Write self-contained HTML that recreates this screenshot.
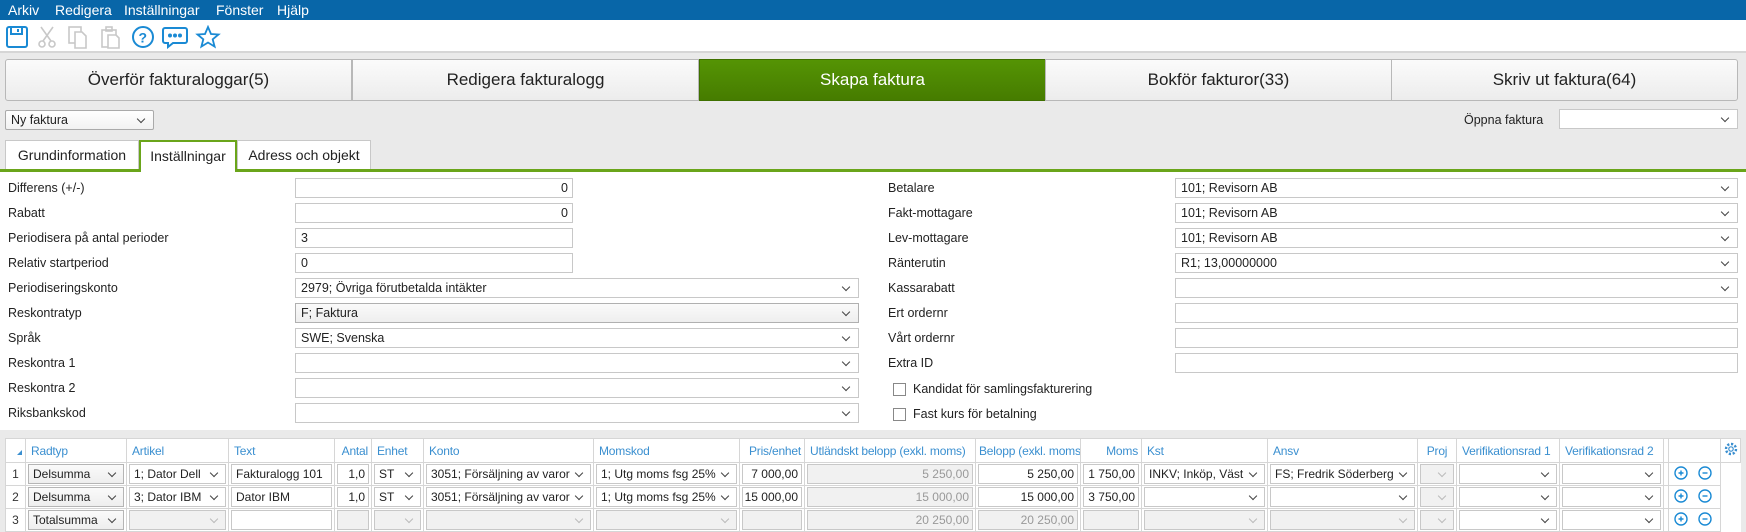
<!DOCTYPE html>
<html><head><meta charset="utf-8"><style>
*{box-sizing:border-box;margin:0;padding:0}
body{width:1746px;height:531px;overflow:hidden;background:#eaeaea;font-family:"Liberation Sans",sans-serif;font-size:13px;color:#222;position:relative}
.a{position:absolute}
#menu{left:0;top:0;width:1746px;height:20px;background:#0866a8;color:#fff;font-size:14px}
#menu span{position:absolute;top:2px}
#tb{left:0;top:20px;width:1746px;height:33px;background:#fff;border-bottom:2px solid #d6d6d6}
.btn{top:59px;height:42px;width:347px;border:1px solid #b8b8b8;background:linear-gradient(#fbfbfb,#ececec);font-size:17px;text-align:center;line-height:40px;color:#222}
.sel,.inp{position:absolute;height:20px;background:#fff;border:1px solid #c8c8c8;font-size:12.5px;line-height:18px;padding-left:5px;white-space:nowrap;overflow:hidden}
.sel::after{content:"";position:absolute;right:9px;top:5px;width:5px;height:5px;border-right:1.3px solid #444;border-bottom:1.3px solid #444;transform:rotate(45deg)}
.inp.r{text-align:right;padding-right:4px}
.tab{top:140px;height:31px;background:#fff;border:1px solid #c8c8c8;border-bottom:none;font-size:14px;text-align:center;line-height:29px}
#form{left:0;top:172px;width:1746px;height:258px;background:#fff}
.lb{position:absolute;font-size:12.5px;color:#222}
table{position:absolute;left:5px;top:438px;width:1735px;border-collapse:collapse;table-layout:fixed;background:#fff}
td{border:1px solid #d6d6d6;height:23px;padding:1px 2px;font-size:12px;overflow:hidden;white-space:nowrap}
th{border:1px solid #d6d6d6;height:22px;font-weight:normal;color:#3a8fd0;text-align:left;padding-left:5px;font-size:12px;letter-spacing:-0.2px;background:#fff;white-space:nowrap;overflow:hidden}
td .c{height:20px;border:1px solid #c8c8c8;background:#fff;line-height:18px;padding-left:4px;padding-right:18px;position:relative;white-space:nowrap;overflow:hidden;font-size:12px}
td .c.s::after{content:"";position:absolute;right:8px;top:5px;width:5px;height:5px;border-right:1.3px solid #444;border-bottom:1.3px solid #444;transform:rotate(45deg)}
td .c.d{background:#f1f1f1;color:#999}
td .c.d.s::after{border-color:#bbb}
td .c.r{text-align:right;padding-right:3px;padding-left:0}
td .c.b{background:linear-gradient(#fafafa,#eee);border-color:#b5b5b5}
td.n{text-align:center;color:#333;padding:0}
.cb{position:absolute;width:13px;height:13px;border:1px solid #888;background:#fff}
</style></head><body>
<div id="menu" class="a"><span style="left:8px">Arkiv</span><span style="left:55px">Redigera</span><span style="left:124px">Inställningar</span><span style="left:216px">Fönster</span><span style="left:277px">Hjälp</span></div>
<div id="tb" class="a">
<svg class="a" style="left:5px;top:5px" width="230" height="24" viewBox="0 0 230 24" fill="none" stroke-width="2">
<g stroke="#1a8ad4"><rect x="2" y="2" width="20" height="20" rx="2"/><rect x="6" y="2" width="11" height="7"/><line x1="13" y1="4" x2="13" y2="7"/></g>
<g stroke="#c8c8c8" stroke-width="1.6"><circle cx="37" cy="19" r="3"/><circle cx="47" cy="19" r="3"/><line x1="38" y1="16" x2="48" y2="2"/><line x1="46" y1="16" x2="36" y2="2"/>
<rect x="64" y="2" width="12" height="16"/><path d="M70 7h7l4 4v12h-11z" fill="#fff"/>
<rect x="97" y="5" width="14" height="17"/><rect x="101" y="2" width="6" height="4"/><path d="M103 10h8l3 3v10h-11z" fill="#fff"/></g>
<g stroke="#1a8ad4"><circle cx="138" cy="12" r="10"/><text x="133.5" y="17.5" font-size="14" fill="#1a8ad4" stroke="none" font-family="Liberation Sans" font-weight="bold">?</text>
<path d="M160 3h20a2 2 0 0 1 2 2v11a2 2 0 0 1-2 2h-12l-5 4v-4h-3a2 2 0 0 1-2-2v-11a2 2 0 0 1 2-2z"/>
<circle cx="165" cy="10.5" r="1" /><circle cx="170" cy="10.5" r="1"/><circle cx="175" cy="10.5" r="1"/>
<path d="M203 2l3 7 7.5.5-5.8 4.8 1.9 7.3-6.6-4.1-6.6 4.1 1.9-7.3-5.8-4.8 7.5-.5z" stroke-width="1.8"/></g>
</svg></div>
<div class="a btn" style="left:5px;border-radius:3px 0 0 3px">Överför fakturaloggar(5)</div>
<div class="a btn" style="left:352px">Redigera fakturalogg</div>
<div class="a btn" style="left:699px;background:linear-gradient(#559404,#467c00);border-color:#3f7000;color:#fff">Skapa faktura</div>
<div class="a btn" style="left:1045px">Bokför fakturor(33)</div>
<div class="a btn" style="left:1391px;width:347px;border-radius:0 3px 3px 0">Skriv ut faktura(64)</div>
<div class="sel" style="left:5px;top:110px;width:149px;background:linear-gradient(#fff,#f2f2f2);border-color:#aaa;border-radius:2px">Ny faktura</div>
<div class="lb" style="left:1464px;top:113px">Öppna faktura</div>
<div class="sel" style="left:1559px;top:109px;width:179px"></div>
<div class="a tab" style="left:5px;width:134px">Grundinformation</div>
<div class="a tab" style="left:139px;width:98px;border:2px solid #6aa51a;border-bottom:none;height:32px">Inställningar</div>
<div class="a tab" style="left:237px;width:134px">Adress och objekt</div>
<div class="a" style="left:0;top:169px;width:1746px;height:3px;background:#6aa51a"></div>
<div class="a" style="left:141px;top:169px;width:94px;height:3px;background:#fff"></div>
<div id="form" class="a"></div>
<div class="lb" style="left:8px;top:181px">Differens (+/-)</div><div class="inp r" style="left:295px;top:178px;width:278px">0</div>
<div class="lb" style="left:8px;top:206px">Rabatt</div><div class="inp r" style="left:295px;top:203px;width:278px">0</div>
<div class="lb" style="left:8px;top:231px">Periodisera på antal perioder</div><div class="inp" style="left:295px;top:228px;width:278px">3</div>
<div class="lb" style="left:8px;top:256px">Relativ startperiod</div><div class="inp" style="left:295px;top:253px;width:278px">0</div>
<div class="lb" style="left:8px;top:281px">Periodiseringskonto</div><div class="sel" style="left:295px;top:278px;width:564px">2979; Övriga förutbetalda intäkter</div>
<div class="lb" style="left:8px;top:306px">Reskontratyp</div><div class="sel" style="left:295px;top:303px;width:564px;background:linear-gradient(#fafafa,#eee);border-color:#b0b0b0">F; Faktura</div>
<div class="lb" style="left:8px;top:331px">Språk</div><div class="sel" style="left:295px;top:328px;width:564px">SWE; Svenska</div>
<div class="lb" style="left:8px;top:356px">Reskontra 1</div><div class="sel" style="left:295px;top:353px;width:564px"></div>
<div class="lb" style="left:8px;top:381px">Reskontra 2</div><div class="sel" style="left:295px;top:378px;width:564px"></div>
<div class="lb" style="left:8px;top:406px">Riksbankskod</div><div class="sel" style="left:295px;top:403px;width:564px"></div>
<div class="lb" style="left:888px;top:181px">Betalare</div><div class="sel" style="left:1175px;top:178px;width:563px">101; Revisorn AB</div>
<div class="lb" style="left:888px;top:206px">Fakt-mottagare</div><div class="sel" style="left:1175px;top:203px;width:563px">101; Revisorn AB</div>
<div class="lb" style="left:888px;top:231px">Lev-mottagare</div><div class="sel" style="left:1175px;top:228px;width:563px">101; Revisorn AB</div>
<div class="lb" style="left:888px;top:256px">Ränterutin</div><div class="sel" style="left:1175px;top:253px;width:563px">R1; 13,00000000</div>
<div class="lb" style="left:888px;top:281px">Kassarabatt</div><div class="sel" style="left:1175px;top:278px;width:563px"></div>
<div class="lb" style="left:888px;top:306px">Ert ordernr</div><div class="inp" style="left:1175px;top:303px;width:563px"></div>
<div class="lb" style="left:888px;top:331px">Vårt ordernr</div><div class="inp" style="left:1175px;top:328px;width:563px"></div>
<div class="lb" style="left:888px;top:356px">Extra ID</div><div class="inp" style="left:1175px;top:353px;width:563px"></div>
<div class="cb" style="left:893px;top:383px"></div><div class="lb" style="left:913px;top:382px">Kandidat för samlingsfakturering</div>
<div class="cb" style="left:893px;top:408px"></div><div class="lb" style="left:913px;top:407px">Fast kurs för betalning</div>
<table>
<colgroup><col style="width:20px"><col style="width:101px"><col style="width:102px"><col style="width:106px"><col style="width:37px"><col style="width:52px"><col style="width:170px"><col style="width:146px"><col style="width:65px"><col style="width:171px"><col style="width:105px"><col style="width:61px"><col style="width:126px"><col style="width:150px"><col style="width:39px"><col style="width:103px"><col style="width:104px"><col style="width:5px"><col style="width:52px"><col style="width:20px"></colgroup>
<tr><th style="padding:0"><svg width="18" height="20"><path d="M11 16h5v-5z" fill="#3a8fd0"/></svg></th><th>Radtyp</th><th>Artikel</th><th>Text</th><th style="text-align:right;padding-right:3px;padding-left:0">Antal</th><th>Enhet</th><th>Konto</th><th>Momskod</th><th style="text-align:right;padding-right:3px;padding-left:0">Pris/enhet</th><th>Utländskt belopp (exkl. moms)</th><th style="padding-left:3px">Belopp (exkl. moms)</th><th style="text-align:right;padding-right:3px">Moms</th><th>Kst</th><th>Ansv</th><th style="text-align:center;padding:0">Proj</th><th>Verifikationsrad 1</th><th>Verifikationsrad 2</th><th></th><th></th><th style="padding:0;text-align:center"><svg width="16" height="16" viewBox="0 0 16 16"><circle cx="8" cy="8" r="5" fill="none" stroke="#3a8fd0" stroke-width="2.4" stroke-dasharray="2.2 1.7"/><circle cx="8" cy="8" r="2.2" fill="none" stroke="#3a8fd0" stroke-width="1.2"/></svg></th></tr>
<tr><td class="n">1</td><td><div class="c s b">Delsumma</div></td><td><div class="c s">1; Dator Dell</div></td><td><div class="c">Fakturalogg 101</div></td><td><div class="c r">1,0</div></td><td><div class="c s">ST</div></td><td><div class="c s">3051; Försäljning av varor</div></td><td><div class="c s">1; Utg moms fsg 25%</div></td><td><div class="c r">7 000,00</div></td><td><div class="c r d">5 250,00</div></td><td><div class="c r">5 250,00</div></td><td><div class="c r">1 750,00</div></td><td><div class="c s">INKV; Inköp, Väst</div></td><td><div class="c s">FS; Fredrik Söderberg</div></td><td><div class="c s d"></div></td><td><div class="c s"></div></td><td><div class="c s"></div></td><td></td><td></td><td style="border:none"></td></tr>
<tr><td class="n">2</td><td><div class="c s b">Delsumma</div></td><td><div class="c s">3; Dator IBM</div></td><td><div class="c">Dator IBM</div></td><td><div class="c r">1,0</div></td><td><div class="c s">ST</div></td><td><div class="c s">3051; Försäljning av varor</div></td><td><div class="c s">1; Utg moms fsg 25%</div></td><td><div class="c r">15 000,00</div></td><td><div class="c r d">15 000,00</div></td><td><div class="c r">15 000,00</div></td><td><div class="c r">3 750,00</div></td><td><div class="c s"></div></td><td><div class="c s"></div></td><td><div class="c s d"></div></td><td><div class="c s"></div></td><td><div class="c s"></div></td><td></td><td></td><td style="border:none"></td></tr>
<tr><td class="n">3</td><td><div class="c s b">Totalsumma</div></td><td><div class="c s d"></div></td><td><div class="c"></div></td><td><div class="c d"></div></td><td><div class="c s d"></div></td><td><div class="c s d"></div></td><td><div class="c s d"></div></td><td><div class="c d"></div></td><td><div class="c r d">20 250,00</div></td><td><div class="c r d">20 250,00</div></td><td><div class="c d"></div></td><td><div class="c s d"></div></td><td><div class="c s d"></div></td><td><div class="c s d"></div></td><td><div class="c s"></div></td><td><div class="c s"></div></td><td></td><td></td><td style="border:none"></td></tr>
</table>
<svg class="a" style="left:1672px;top:464px" width="44" height="66" viewBox="0 0 44 66" fill="none" stroke="#1a8ad4" stroke-width="1.4">
<g><circle cx="9" cy="9" r="6"/><path d="M9 6.5v5M6.5 9h5"/><circle cx="33" cy="9" r="6"/><path d="M30.5 9h5"/></g>
<g transform="translate(0,23)"><circle cx="9" cy="9" r="6"/><path d="M9 6.5v5M6.5 9h5"/><circle cx="33" cy="9" r="6"/><path d="M30.5 9h5"/></g>
<g transform="translate(0,46)"><circle cx="9" cy="9" r="6"/><path d="M9 6.5v5M6.5 9h5"/><circle cx="33" cy="9" r="6"/><path d="M30.5 9h5"/></g>
</svg>
</body></html>
